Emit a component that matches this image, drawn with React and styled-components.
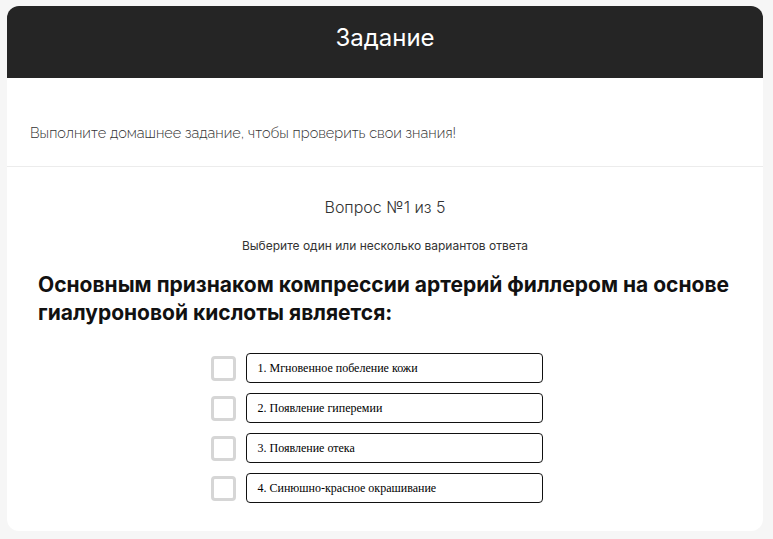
import React, { useState } from 'react';
import styled, { createGlobalStyle } from 'styled-components';

const GlobalStyle = createGlobalStyle`
  html, body {
    margin: 0;
    padding: 0;
    background: #f6f6f6;
  }
  * { box-sizing: border-box; }
`;

const Page = styled.div`
  padding: 6px 10px 9px 7px;
`;

const Card = styled.div`
  background: #fff;
  border-radius: 12px;
  overflow: hidden;
  font-family: Inter, "Noto Sans", sans-serif;
`;

const Header = styled.div`
  height: 72px;
  padding-bottom: 9px;
  background: #252525;
  color: #fff;
  display: flex;
  align-items: center;
  justify-content: center;
  font-size: 24px;
  font-weight: 400;
`;

const Intro = styled.div`
  padding: 46px 23px 25px;
  font-family: Raleway, "Noto Sans", sans-serif;
  font-size: 14.5px;
  font-weight: 300;
  color: #333;
  border-bottom: 1px solid #ececec;
`;

const Body = styled.div`
  padding: 30px 31px 28px;
`;

const Counter = styled.div`
  text-align: center;
  font-size: 16px;
  font-weight: 300;
  color: #333;
  line-height: 20px;
`;

const Hint = styled.div`
  text-align: center;
  font-size: 12px;
  color: #333;
  margin-top: 21px;
  line-height: 16px;
`;

const Question = styled.h2`
  margin: 17px 0 26px;
  font-size: 21px;
  font-weight: 700;
  line-height: 28px;
  color: #111;
`;

const Options = styled.div`
  display: flex;
  flex-direction: column;
  gap: 10px;
  align-items: center;
  padding-right: 17px;
`;

const Row = styled.label`
  display: flex;
  align-items: center;
  gap: 10px;
  cursor: pointer;
`;

const Box = styled.span`
  width: 25px;
  height: 25px;
  border: 3px solid ${p => (p.$checked ? '#252525' : '#d6d6d6')};
  background: ${p => (p.$checked ? '#252525' : '#fff')};
  border-radius: 4px;
  flex: none;
`;

const Answer = styled.div`
  width: 297px;
  height: 30px;
  border: 1px solid #111;
  border-radius: 4px;
  display: flex;
  align-items: center;
  padding-left: 11px;
  font-family: "Liberation Serif", serif;
  font-size: 12px;
  color: #000;
`;

const answers = [
  '1. Мгновенное побеление кожи',
  '2. Появление гиперемии',
  '3. Появление отека',
  '4. Синюшно-красное окрашивание',
];

export default function App() {
  const [picked, setPicked] = useState([]);

  const toggle = (i) => {
    setPicked(picked.includes(i) ? picked.filter(x => x !== i) : [...picked, i]);
  };

  return (
    <Page>
      <GlobalStyle />
      <Card>
        <Header>Задание</Header>
        <Intro>Выполните домашнее задание, чтобы проверить свои знания!</Intro>
        <Body>
          <Counter>Вопрос №1 из 5</Counter>
          <Hint>Выберите один или несколько вариантов ответа</Hint>
          <Question>
            Основным признаком компрессии артерий филлером на основе гиалуроновой кислоты является:
          </Question>
          <Options>
            {answers.map((a, i) => (
              <Row key={i} onClick={() => toggle(i)}>
                <Box $checked={picked.includes(i)} />
                <Answer>{a}</Answer>
              </Row>
            ))}
          </Options>
        </Body>
      </Card>
    </Page>
  );
}
